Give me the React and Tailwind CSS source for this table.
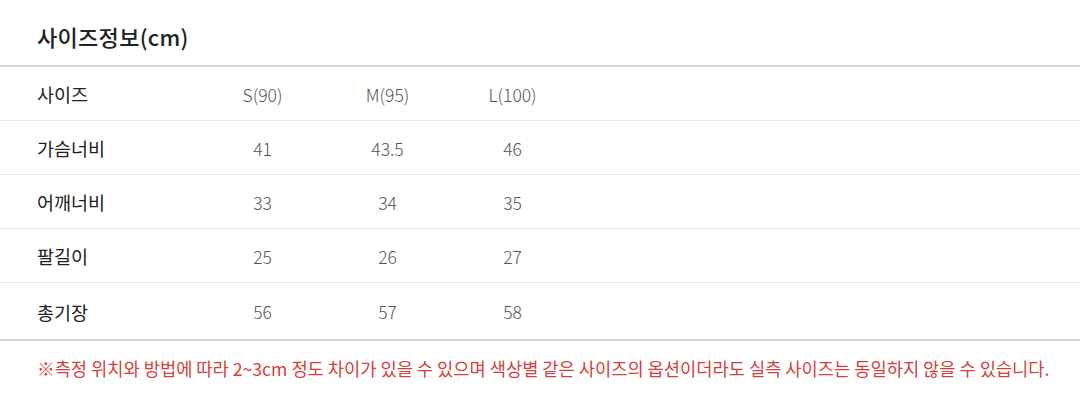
export default function App() {
  const rows = [
    ["사이즈", "S(90)", "M(95)", "L(100)"],
    ["가슴너비", "41", "43.5", "46"],
    ["어깨너비", "33", "34", "35"],
    ["팔길이", "25", "26", "27"],
    ["총기장", "56", "57", "58"],
  ];
  return (
    <div className="w-[1080px] h-[404px] bg-white" style={{ fontFamily: '"Noto Sans CJK KR", "Noto Sans", sans-serif' }}>
      <div className="h-[65px] pl-[37px] pt-[21px] text-[22px] font-medium text-[#222] leading-[30px] tracking-[0.3px]">사이즈정보(cm)</div>
      <div className="border-t-2 border-b-2 border-[#d4d4d4]">
        {rows.map((r, i) => (
          <div
            key={i}
            className={`flex items-center pt-[3px] h-[54px] ${i < rows.length - 1 ? "border-b border-[#e8e8e8]" : "h-[56px]"}`}
          >
            <div className="w-[200px] pl-[37px] text-[18.5px] text-[#222]">{r[0]}</div>
            {r.slice(1).map((c, j) => (
              <div key={j} className="w-[125px] text-center text-[17.5px] font-light text-[#555]">{c}</div>
            ))}
          </div>
        ))}
      </div>
      <div className="pl-[37px] pt-[16px] text-[17.65px] text-[#d43f3a] leading-[24px] whitespace-nowrap">
        ※측정 위치와 방법에 따라 2~3cm 정도 차이가 있을 수 있으며 색상별 같은 사이즈의 옵션이더라도 실측 사이즈는 동일하지 않을 수 있습니다.
      </div>
    </div>
  );
}
